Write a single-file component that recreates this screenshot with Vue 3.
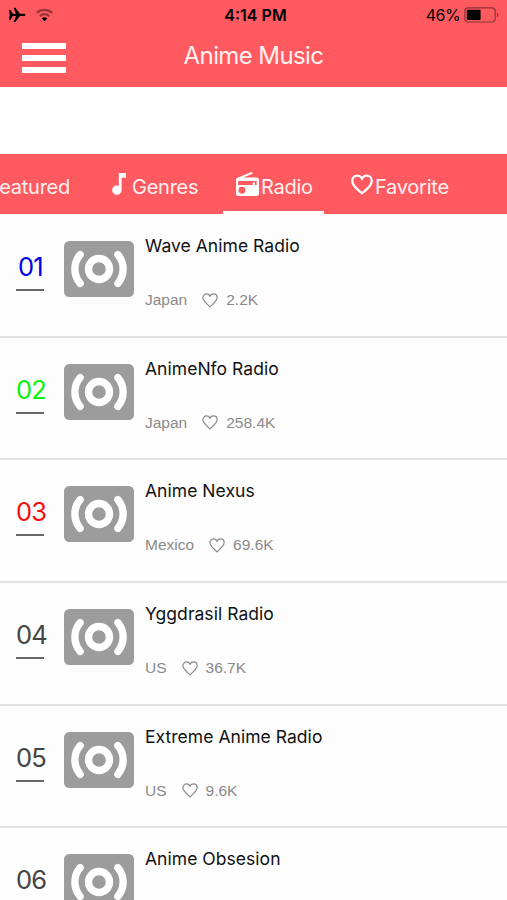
<template>
  <div class="screen">
    <header class="header">
      <div class="status-bar">
        <div class="status-left">
          <svg class="plane" viewBox="0 0 18 16">
            <path d="M1 3h1.600l2.100 3.700h3.400L5.500.8h1.800l4.700 5.900h3.800c.9 0 1.600.5 1.600 1.200s-.7 1.200-1.600 1.200H12L7.300 15H5.500l2.600-5.900H4.700L2.600 12.800H1l.8-4.900z" />
          </svg>
          <svg class="wifi" viewBox="0 0 20 14">
            <path class="wifi-off" d="M1.800 4.800C6.500 .6 13.500 .6 18.200 4.800" />
            <path class="wifi-off" d="M5 8.200c3-2.700 7-2.700 10 0" />
            <path d="M10 13.500 7.100 10.600c1.600-1.500 4.200-1.500 5.800 0z" />
          </svg>
        </div>
        <span class="time">4:14 PM</span>
        <div class="status-right">
          <span class="percent">46%</span>
          <svg class="battery" viewBox="0 0 36 16">
            <rect class="battery-case" x=".8" y=".8" width="30.400" height="14.200" rx="3.500" />
            <rect x="2.800" y="2.800" width="13.800" height="10.200" rx="1" />
            <path class="battery-tip" d="M33 5.500c1.900.7 1.900 4.100 0 4.800z" />
          </svg>
        </div>
      </div>
      <div class="title-bar">
        <button class="menu-btn" aria-label="Menu">
          <span></span>
          <span></span>
          <span></span>
        </button>
        <h1>Anime Music</h1>
      </div>
    </header>

    <div class="banner"></div>

    <nav class="tabs">
      <a class="tab tab-featured">Featured</a>
      <a class="tab tab-genres">
        <svg class="note" viewBox="0 0 15 22">
          <path d="M6.800 0H14v4.800H9.600V17A4.700 4.700 0 1 1 6.800 12.800z" />
        </svg>
        <span>Genres</span>
      </a>
      <a class="tab tab-radio active">
        <svg class="radio" viewBox="2 1.200 20 20.800">
          <path fill-rule="evenodd" d="M3.240 6.150C2.510 6.430 2 7.170 2 8v12c0 1.100.89 2 2 2h16c1.110 0 2-.9 2-2V8c0-1.110-.89-2-2-2H8.300l8.260-3.340L15.880 1 3.240 6.150zM7.200 20a3 3 0 1 1 0-6 3 3 0 0 1 0 6zM20 12.400h-1.500v-2h-2v2H3.800V9H20z" />
        </svg>
        <span>Radio</span>
      </a>
      <a class="tab tab-favorite">
        <svg class="heart" viewBox="0 0 22 20.500">
          <path :d="heartPath" />
        </svg>
        <span>Favorite</span>
      </a>
    </nav>

    <main class="stations">
      <article v-for="station in stations" :key="station.rank" class="station">
        <div class="rank" :class="'rank-' + station.rank">
          <span>{{ station.rank }}</span>
        </div>
        <svg class="cover" viewBox="2 4 20 16">
          <rect class="cover-bg" x="2" y="4" width="20" height="16" rx="1.500" />
          <circle class="cover-ring" cx="12" cy="12" r="3" />
          <path class="cover-wave" d="M6.600 7.900C4.600 10.300 4.600 13.700 6.600 16.100" />
          <path class="cover-wave" d="M17.400 7.900C19.400 10.300 19.400 13.700 17.400 16.100" />
        </svg>
        <div class="info">
          <h2>{{ station.name }}</h2>
          <div v-if="station.country" class="meta">
            <span>{{ station.country }}</span>
            <svg class="like" viewBox="0 0 22 20.500">
              <path :d="heartPath" />
            </svg>
            <span>{{ station.likes }}</span>
          </div>
        </div>
      </article>
    </main>
  </div>
</template>

<script setup>
import { ref } from 'vue'

const heartPath =
  'M11 19C4 13 1.200 10.300 1.200 6.600 1.200 3.500 3.500 1.300 6.300 1.300c1.900 0 3.700 1 4.700 2.900 1-1.900 2.800-2.900 4.700-2.900 2.800 0 5.100 2.200 5.100 5.300 0 3.700-2.800 6.400-9.800 12.400z'

const stations = ref([
  { rank: '01', name: 'Wave Anime Radio', country: 'Japan', likes: '2.2K' },
  { rank: '02', name: 'AnimeNfo Radio', country: 'Japan', likes: '258.4K' },
  { rank: '03', name: 'Anime Nexus', country: 'Mexico', likes: '69.6K' },
  { rank: '04', name: 'Yggdrasil Radio', country: 'US', likes: '36.7K' },
  { rank: '05', name: 'Extreme Anime Radio', country: 'US', likes: '9.6K' },
  { rank: '06', name: 'Anime Obsesion' }
])
</script>

<style>
body {
  margin: 0;
  overflow: hidden;
}
</style>

<style scoped>
.screen {
  height: 900px;
  overflow: hidden;
  background: #fdfdfd;
  font-family: Inter, 'Liberation Sans', sans-serif;
}

.header {
  height: 87px;
  background: #ff5a60;
}

.status-bar {
  display: grid;
  grid-template-columns: 1fr auto 1fr;
  align-items: center;
  height: 30px;
  padding: 0 7px 0 8px;
}

.status-left,
.status-right {
  display: flex;
  align-items: center;
}

.status-left {
  gap: 9px;
}

.status-right {
  justify-content: flex-end;
  gap: 4px;
}

.plane {
  width: 18px;
  height: 16px;
}

.wifi {
  width: 19px;
  height: 14px;
}

.wifi-off {
  fill: none;
  stroke: #000;
  stroke-opacity: 0.4;
  stroke-width: 2.3;
}

.time {
  padding-left: 3px;
  font-size: 16px;
  font-weight: 600;
}

.percent {
  font-size: 16px;
  letter-spacing: -0.6px;
}

.battery {
  width: 36px;
  height: 16px;
}

.battery-case {
  fill: none;
  stroke: #8c3236;
  stroke-width: 1.2;
}

.battery-tip {
  fill: #8c3236;
}

.title-bar {
  display: grid;
  grid-template-columns: 44px 1fr 44px;
  align-items: center;
  height: 54px;
  padding: 0 22px;
}

.menu-btn {
  display: flex;
  flex-direction: column;
  gap: 6px;
  padding: 1px 0 0;
  border: none;
  background: none;
}

.menu-btn span {
  width: 44px;
  height: 6px;
  background: #fff;
}

.title-bar h1 {
  margin: 0 0 2px;
  color: #fff0ef;
  font-size: 24px;
  font-weight: 400;
  letter-spacing: -0.6px;
  line-height: 30px;
  text-align: center;
}

.banner {
  height: 67px;
  background: #fff;
}

.tabs {
  display: flex;
  height: 60px;
  background: #ff5a60;
  color: #fff0ef;
  font-size: 20px;
  letter-spacing: -0.25px;
  overflow: hidden;
}

.tab {
  display: flex;
  flex: none;
  align-items: center;
  box-sizing: border-box;
  height: 60px;
  padding-top: 8px;
  border-bottom: 3px solid transparent;
  white-space: nowrap;
}

.tab svg {
  flex: none;
  fill: #fff;
}

.tab-featured {
  justify-content: flex-end;
  width: 70px;
}

.tab-genres {
  width: 111px;
  margin-left: 42px;
}

.tab-radio {
  width: 101px;
  padding-left: 13px;
}

.tab-favorite {
  margin-left: 27px;
}

.tab.active {
  border-bottom-color: #fff;
}

.note {
  width: 15px;
  height: 22px;
  margin: 0 5px 5px 0;
}

.radio {
  width: 23px;
  height: 24px;
  margin: 0 2px 5px 0;
}

.tab .heart {
  width: 22px;
  height: 21px;
  margin: 0 2px 5px 0;
  fill: none;
  stroke: #fff;
  stroke-width: 2.3;
}

.stations {
  padding-top: 1px;
}

.station {
  display: flex;
  box-sizing: border-box;
  height: 122.7px;
  padding-left: 16px;
  border-bottom: 2px solid #e2e2e2;
}

.rank {
  flex: none;
  width: 48px;
  padding-top: 36px;
  color: #444;
  font-size: 25.5px;
  letter-spacing: -0.8px;
  line-height: 32px;
}

.rank span {
  display: block;
  width: 29px;
  text-align: center;
}

.rank::after {
  content: '';
  display: block;
  width: 28px;
  height: 2px;
  margin-top: 6px;
  background: #666;
}

.rank-01 {
  color: #0000e6;
}

.rank-02 {
  color: #0df20d;
}

.rank-03 {
  color: #f50f12;
}

.cover {
  flex: none;
  width: 70px;
  height: 56px;
  margin-top: 26px;
}

.cover-bg {
  fill: #9c9c9c;
}

.cover-ring,
.cover-wave {
  fill: none;
  stroke: #fff;
  stroke-width: 2.1;
  stroke-linecap: round;
}

.info {
  padding: 20px 0 0 11px;
}

.info h2 {
  margin: 0;
  color: #111;
  font-size: 17.5px;
  font-weight: 400;
  letter-spacing: 0.04px;
  line-height: 22px;
}

.meta {
  display: flex;
  align-items: center;
  margin-top: 34px;
  color: #8a8a8a;
  font-family: 'Liberation Sans', Arial, sans-serif;
  font-size: 15.5px;
  line-height: 18px;
}

.like {
  width: 16px;
  height: 15px;
  margin: 0 8px 0 15px;
  fill: none;
  stroke: #8a8a8a;
  stroke-width: 1.7;
}
</style>
